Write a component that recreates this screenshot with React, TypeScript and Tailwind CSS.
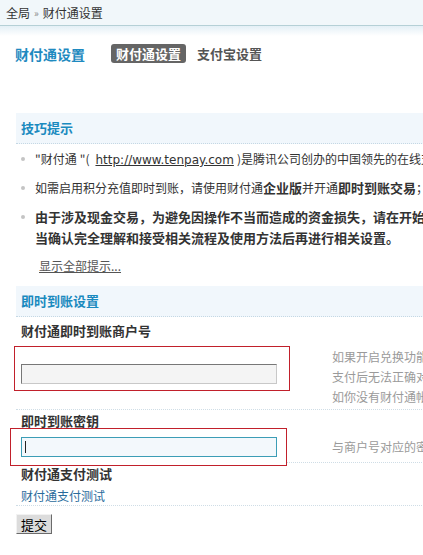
import React from "react";

function Bullet() {
  return <span className="mt-[9px] ml-[5px] mr-[10px] h-[4px] w-[4px] flex-none rounded-full bg-[#c4c4c4]" />;
}

export default function App() {
  return (
    <div className="relative h-[555px] w-[423px] overflow-hidden bg-white font-['Noto_Sans_CJK_SC',sans-serif] text-[12px] text-[#333]">
      {/* breadcrumb */}
      <div className="flex h-[26px] items-center border-b border-[#b5d0d6] bg-[#f1f7fa] pl-[6px] leading-none text-[#333]">
        <span>全局</span>
        <span className="mx-[4px] text-[10px] text-[#888]">»</span>
        <span>财付通设置</span>
      </div>
      <div className="h-[10px] bg-gradient-to-b from-[#e4f0f6] to-white" />

      {/* title row */}
      <div className="mt-[8px] flex h-[19px] items-center whitespace-nowrap pl-[15px]">
        <div className="w-[96px] text-[14px] font-bold leading-none text-[#1f8ac0]">财付通设置</div>
        <div className="flex h-[19px] items-center rounded-[3px] bg-[#656565] px-[5px] text-[13px] font-bold leading-none text-white">
          财付通设置
        </div>
        <div className="ml-[11px] text-[13px] font-bold leading-none text-[#555]">支付宝设置</div>
      </div>

      {/* content */}
      <div className="mt-[50px] w-[760px] pl-[16px]">
        {/* tips header */}
        <div className="flex h-[31px] items-center border-b border-dotted border-[#c5d8e4] bg-[#f1f7fc] pl-[5px] text-[13px] font-bold text-[#1a8abf]">
          技巧提示
        </div>
        <ul className="pt-[4px]">
          <li className="mb-[8px] flex h-[21px] overflow-hidden whitespace-nowrap leading-[21px]">
            <Bullet />
            <span>
              "财付通<span className="ml-[3px]">"(</span>
              <a className="ml-[6px] font-['DejaVu_Sans',sans-serif] text-[12px] leading-[21px] text-[#333] underline" href="#">
                http://www.tenpay.com
              </a>
              <span className="ml-[3px]">)</span>是腾讯公司创办的中国领先的在线支付平台，致力于为互联网用户和企业提供安全、便捷、专业的在线支付服务。
            </span>
          </li>
          <li className="mb-[8px] flex h-[21px] overflow-hidden whitespace-nowrap leading-[21px]">
            <Bullet />
            <span>
              如需启用积分充值即时到账，请使用财付通<b className="text-[13px] leading-[21px]">企业版</b>并开通<b className="text-[13px] leading-[21px]">即时到账交易</b>；否则将无法正常使用。
            </span>
          </li>
          <li className="mb-[7px] flex h-[42px] whitespace-nowrap text-[13px] font-bold leading-[21px]">
            <Bullet />
            <span>
              由于涉及现金交易，为避免因操作不当而造成的资金损失，请在开始使用财付通积分充值功能前，务必仔细阅读有关说明，
              <br />
              当确认完全理解和接受相关流程及使用方法后再进行相关设置。
            </span>
          </li>
        </ul>
        <div className="h-[21px] pl-[23px] leading-[21px]">
          <a href="#" className="text-[#555] underline">显示全部提示...</a>
        </div>

        {/* instant settings header */}
        <div className="mt-[10px] flex h-[31px] items-center border-b border-dotted border-[#c5d8e4] bg-[#f1f7fc] pl-[5px] text-[13px] font-bold text-[#1a8abf]">
          即时到账设置
        </div>

        {/* merchant id */}
        <div className="mt-[3px] h-[21px] pl-[5px] text-[13px] font-bold leading-[21px] text-[#333]">财付通即时到账商户号</div>
        <div className="flex h-[69px] border-b border-dotted border-[#cfdde6]">
          <div className="relative w-[316px] flex-none">
            <div className="pointer-events-none absolute left-[-2px] top-[5px] h-[45px] w-[276px] border border-[#c1202b]" />
            <input
              readOnly
              className="relative ml-[5px] mt-[23px] block h-[20px] w-[256px] border border-t-[#777] border-l-[#777] border-b-[#c8c8c8] border-r-[#c8c8c8] bg-[#f4f4f4] outline-none"
            />
          </div>
          <div className="whitespace-nowrap pt-[6px] leading-[20px] text-[#9a9a9a]">
            <div>如果开启兑换功能，请填写真实有效的财付通商户号，否则可能会造成用户</div>
            <div>支付后无法正确对积分账户自动充值，或者用户支付成功后积分无法到账</div>
            <div>如你没有财付通帐号，请点击这里申请</div>
          </div>
        </div>

        {/* key */}
        <div className="h-[21px] pl-[5px] text-[13px] font-bold leading-[21px] text-[#333]">即时到账密钥</div>
        <div className="flex h-[32px] border-b border-dotted border-[#cfdde6]">
          <div className="relative w-[316px] flex-none">
            <div className="pointer-events-none absolute left-[-6px] top-[-3px] h-[38px] w-[277px] border border-[#c1202b] bg-white" />
            <div className="relative ml-[5px] mt-[6px] h-[20px] w-[256px]">
              <input
                readOnly
                className="block h-[20px] w-[256px] border border-[#3c9db6] bg-[#f3f8fc] outline-none"
              />
              <span className="absolute left-[4px] top-[4px] h-[12px] w-[1px] bg-[#222]" />
            </div>
          </div>
          <div className="whitespace-nowrap pt-[6px] leading-[20px] text-[#9a9a9a]">与商户号对应的密钥，请登录财付通商户平台获取</div>
        </div>

        {/* test */}
        <div className="relative h-[21px] pl-[5px] text-[13px] font-bold leading-[21px] text-[#333]">财付通支付测试</div>
        <div className="h-[22px] border-b border-dotted border-[#cfdde6] pl-[5px] pt-[3px] leading-[18px]">
          <a href="#" className="text-[#2a6b9c]">财付通支付测试</a>
        </div>

        <button className="mt-[8px] flex h-[20px] w-[36px] items-center justify-center border border-t-[#f2f2f2] border-l-[#f2f2f2] border-b-[#6b6b6b] border-r-[#6b6b6b] bg-[#dcdcdc] text-[13px] leading-none text-black">
          提交
        </button>
      </div>
    </div>
  );
}
